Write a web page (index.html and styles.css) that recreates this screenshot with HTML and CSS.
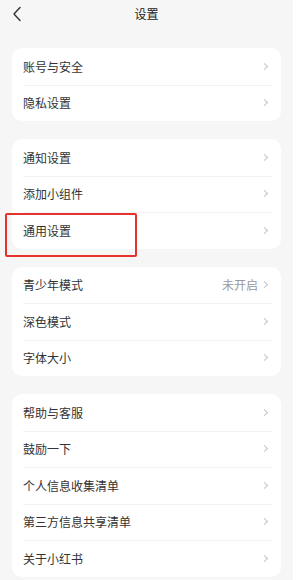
FILE: index.html
```html
<!DOCTYPE html>
<html lang="zh-CN">
<head>
    <meta charset="UTF-8">
    <meta name="viewport" content="width=device-width, initial-scale=1.0">
    <title>设置</title>
    <link rel="stylesheet" href="styles.css">
</head>
<body>
<div class="page">
    <div class="header">
        <svg class="back" width="10" height="16" viewBox="0 0 10 16"><path d="M8 1.5 L2 8 L8 14.5" fill="none" stroke="#333" stroke-width="1.4" stroke-linecap="round" stroke-linejoin="round"/></svg>
        <div class="title">设置</div>
    </div>

    <div class="card">
        <div class="row"><span>账号与安全</span><i class="arrow"></i></div>
        <div class="row"><span>隐私设置</span><i class="arrow"></i></div>
    </div>

    <div class="card">
        <div class="row"><span>通知设置</span><i class="arrow"></i></div>
        <div class="row"><span>添加小组件</span><i class="arrow"></i></div>
        <div class="row highlight"><span>通用设置</span><i class="arrow"></i></div>
    </div>

    <div class="card">
        <div class="row"><span>青少年模式</span><em class="value">未开启</em><i class="arrow"></i></div>
        <div class="row"><span>深色模式</span><i class="arrow"></i></div>
        <div class="row"><span>字体大小</span><i class="arrow"></i></div>
    </div>

    <div class="card">
        <div class="row"><span>帮助与客服</span><i class="arrow"></i></div>
        <div class="row"><span>鼓励一下</span><i class="arrow"></i></div>
        <div class="row"><span>个人信息收集清单</span><i class="arrow"></i></div>
        <div class="row"><span>第三方信息共享清单</span><i class="arrow"></i></div>
        <div class="row"><span>关于小红书</span><i class="arrow"></i></div>
    </div>
</div>
</body>
</html>
```

FILE: styles.css
```css
body { margin: 0; background: #fff; font-family: "Noto Sans CJK SC", "Noto Sans", sans-serif; color: #333; }
.page { width: 293px; min-height: 580px; background: #f6f6f6; padding: 0 12px; box-sizing: border-box; overflow: hidden; }

.header { position: relative; height: 26px; display: flex; align-items: center; justify-content: center; margin-bottom: 22px; }
.header .back { position: absolute; left: 0; top: 6px; }
.title { font-size: 12px; color: #222; }

.card { background: #fff; border-radius: 10px; margin-bottom: 18px; }
.row {
    position: relative;
    height: 36.5px;
    display: flex;
    align-items: center;
    padding: 0 12px 0 11px;
    font-size: 12px;
}
.row span { flex: 1; }
.row + .row::before {
    content: "";
    position: absolute;
    top: 0;
    left: 11px;
    right: 9px;
    border-top: 1px solid #f1f1f1;
}
.value { font-style: normal; color: #9a9a9a; margin-right: 4px; }
.arrow {
    width: 4px;
    height: 4px;
    border-top: 1px solid #c4c4c4;
    border-right: 1px solid #c4c4c4;
    transform: rotate(45deg);
    margin-right: 2px;
}

.highlight::after {
    content: "";
    position: absolute;
    left: -7px;
    top: 1px;
    width: 128px;
    height: 40px;
    border: 2px solid #e5322d;
    border-radius: 2px;
}
```
